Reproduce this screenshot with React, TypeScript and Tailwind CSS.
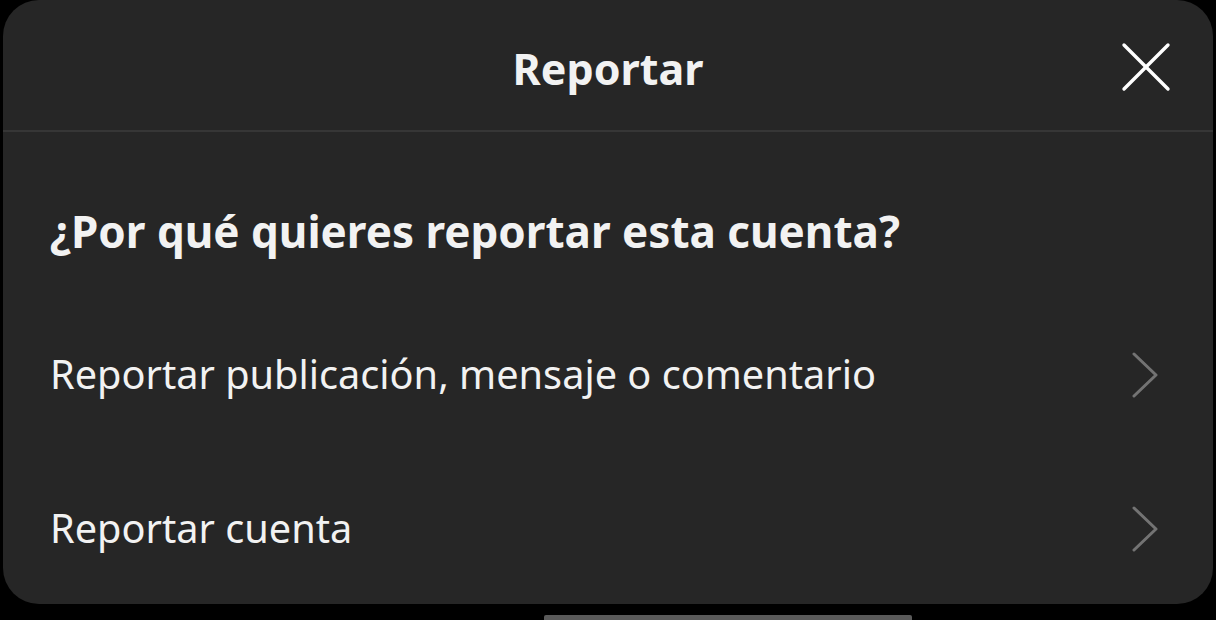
const options = ['Reportar publicación, mensaje o comentario', 'Reportar cuenta'];

function CloseIcon() {
  return (
    <svg width="50" height="50" viewBox="0 0 50 50" fill="none" stroke="currentColor" strokeWidth="3.4" strokeLinecap="round">
      <line x1="3" y1="3" x2="47" y2="47" />
      <line x1="47" y1="3" x2="3" y2="47" />
    </svg>
  );
}

function Chevron() {
  return (
    <svg width="26" height="46" viewBox="0 0 26 46" fill="none" stroke="currentColor" strokeWidth="3" strokeLinecap="round" strokeLinejoin="round">
      <polyline points="2,2 24,23 2,44" />
    </svg>
  );
}

export default function App() {
  return (
    <div
      className="flex h-[620px] flex-col bg-black"
      style={{ fontFamily: '"Noto Sans", "Open Sans", sans-serif' }}
    >
      <div className="mx-[3px] flex h-[604px] shrink-0 flex-col overflow-hidden rounded-[36px] bg-[#262626] text-[#f2f2f2]">
        {/* header */}
        <div className="relative flex h-[132px] shrink-0 items-center justify-center border-b-2 border-[#363636] pt-[8px]">
          <h1 className="text-[43px] font-bold">Reportar</h1>
          <button className="absolute right-[42px] top-[42px] text-white">
            <CloseIcon />
          </button>
        </div>

        <div className="pl-[47px] pr-[55px]">
          <h2 className="pt-[70px] pb-[65px] text-[44px] leading-[58px] font-bold">
            ¿Por qué quieres reportar esta cuenta?
          </h2>
          <div className="flex flex-col gap-[54px]">
            {options.map((opt) => (
              <div key={opt} className="flex h-[100px] items-center justify-between">
                <span className="text-[39.7px]">{opt}</span>
                <span className="text-[#737373]">
                  <Chevron />
                </span>
              </div>
            ))}
          </div>
        </div>
      </div>
      <div className="mt-[11px] ml-[544px] h-[5px] w-[368px] rounded-t-[2px] bg-[#5a5a5a]" />
    </div>
  );
}
